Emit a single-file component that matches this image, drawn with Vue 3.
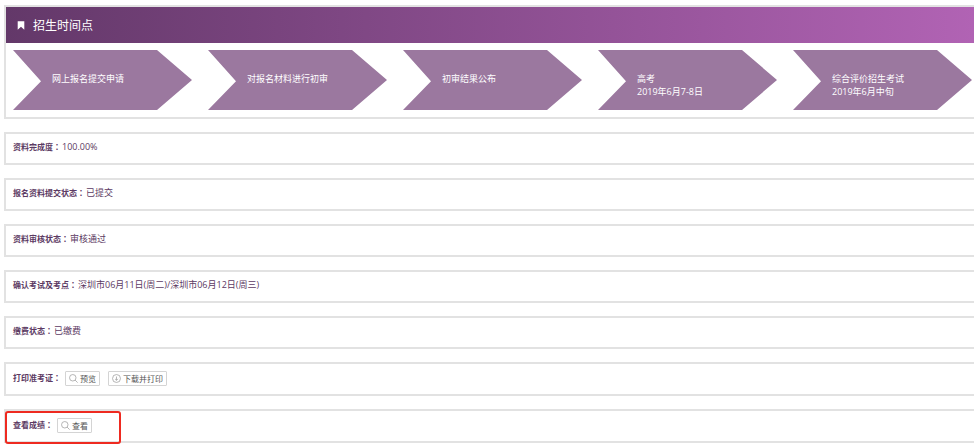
<template>
  <main class="page">
    <section class="panel">
      <h1 class="panel-header">
        <svg class="bookmark" viewBox="0 0 8 9" aria-hidden="true">
          <path d="M0.7 0.3h6.6v8.5L4 5.8 0.7 8.8z" fill="#fff" />
        </svg>
        招生时间点
      </h1>
      <ol class="steps">
        <li v-for="step in steps" :key="step.name" class="step">
          <div>{{ step.name }}</div>
          <div v-if="step.date">{{ step.date }}</div>
        </li>
      </ol>
    </section>

    <section
      v-for="row in rows"
      :key="row.label"
      class="row"
      :class="{ 'with-actions': row.actions }"
    >
      <span class="label">{{ row.label }}<span class="colon">：</span></span>
      <span v-if="row.value" class="value">{{ row.value }}</span>
      <div v-if="row.actions" class="actions">
        <button v-for="action in row.actions" :key="action.text" type="button">
          <svg v-if="action.icon === 'search'" viewBox="0 0 10 10" aria-hidden="true">
            <circle cx="4.2" cy="4.2" r="3.6" />
            <path d="M6.8 6.8L9.6 9.6" />
          </svg>
          <svg v-else viewBox="0 0 10 10" aria-hidden="true">
            <circle cx="5" cy="5" r="4.4" />
            <path d="M5 2.8v4.2M3.4 5.4L5 7l1.6-1.6" />
          </svg>
          {{ action.text }}
        </button>
      </div>
      <div v-if="row.marked" class="mark"></div>
    </section>
  </main>
</template>

<script setup>
const steps = [
  { name: "网上报名提交申请" },
  { name: "对报名材料进行初审" },
  { name: "初审结果公布" },
  { name: "高考", date: "2019年6月7-8日" },
  { name: "综合评价招生考试", date: "2019年6月中旬" }
];

const rows = [
  { label: "资料完成度", value: "100.00%" },
  { label: "报名资料提交状态", value: "已提交" },
  { label: "资料审核状态", value: "审核通过" },
  { label: "确认考试及考点", value: "深圳市06月11日(周二)/深圳市06月12日(周三)" },
  { label: "缴费状态", value: "已缴费" },
  {
    label: "打印准考证",
    actions: [
      { icon: "search", text: "预览" },
      { icon: "download", text: "下载并打印" }
    ]
  },
  { label: "查看成绩", actions: [{ icon: "search", text: "查看" }], marked: true }
];
</script>

<style>
body {
  margin: 0;
  background: #fff;
}
</style>

<style scoped>
.page {
  padding: 5px 0 2px 4px;
  font-family: "Open Sans", "Noto Sans CJK SC", sans-serif;
  font-size: 9px;
  line-height: 13px;
  color: #5c3a63;
}

.panel {
  border: 2px solid #e2e2e2;
  border-right: none;
  margin-bottom: 13px;
}

.panel-header {
  display: flex;
  align-items: center;
  gap: 8px;
  height: 36px;
  margin: 0;
  padding-left: 11px;
  font-size: 12px;
  font-weight: normal;
  color: #fff;
  background: linear-gradient(to right, #633869, #b163b4);
}

.bookmark {
  width: 8px;
  height: 9px;
}

.steps {
  display: flex;
  gap: 16px;
  margin: 0;
  padding: 7px 2px 7px 7px;
  list-style: none;
}

.step {
  flex: 1;
  min-width: 0;
  box-sizing: border-box;
  height: 60px;
  padding: 22px 0 0 39px;
  color: #fff;
  background: #9b789f;
  clip-path: polygon(0 0, calc(100% - 35px) 0, 100% 50%, calc(100% - 35px) 100%, 0 100%, 28px 52%);
}

.row {
  position: relative;
  display: flex;
  align-items: flex-start;
  box-sizing: border-box;
  min-height: 33px;
  margin-bottom: 13px;
  padding: 6px 7px;
  border: 2px solid #e2e2e2;
  border-right: none;
}

.row:last-child {
  margin-bottom: 0;
}

.with-actions {
  gap: 4px;
  min-height: 34px;
  padding-top: 7px;
}

.label {
  font-size: 8px;
  font-weight: bold;
}

/* the TC face centres the full-width colon */
.colon {
  font-family: "Noto Sans CJK TC", sans-serif;
}

.value {
  margin-left: 1px;
}

.actions {
  display: flex;
  gap: 8px;
}

button {
  display: flex;
  align-items: center;
  gap: 2px;
  height: 15px;
  padding: 0 3px;
  border: 1px solid #d4d4d4;
  border-radius: 1px;
  background: #fff;
  font-family: inherit;
  font-size: 8px;
  line-height: 13px;
  color: #555;
  cursor: pointer;
}

button svg {
  width: 9px;
  height: 9px;
  fill: none;
  stroke: #999;
  stroke-width: 0.8;
}

/* red frame over the score row */
.mark {
  position: absolute;
  top: 0;
  left: -1px;
  box-sizing: border-box;
  width: 116px;
  height: 33px;
  border: 2px solid #ee2a20;
  border-radius: 3px;
  pointer-events: none;
}
</style>
